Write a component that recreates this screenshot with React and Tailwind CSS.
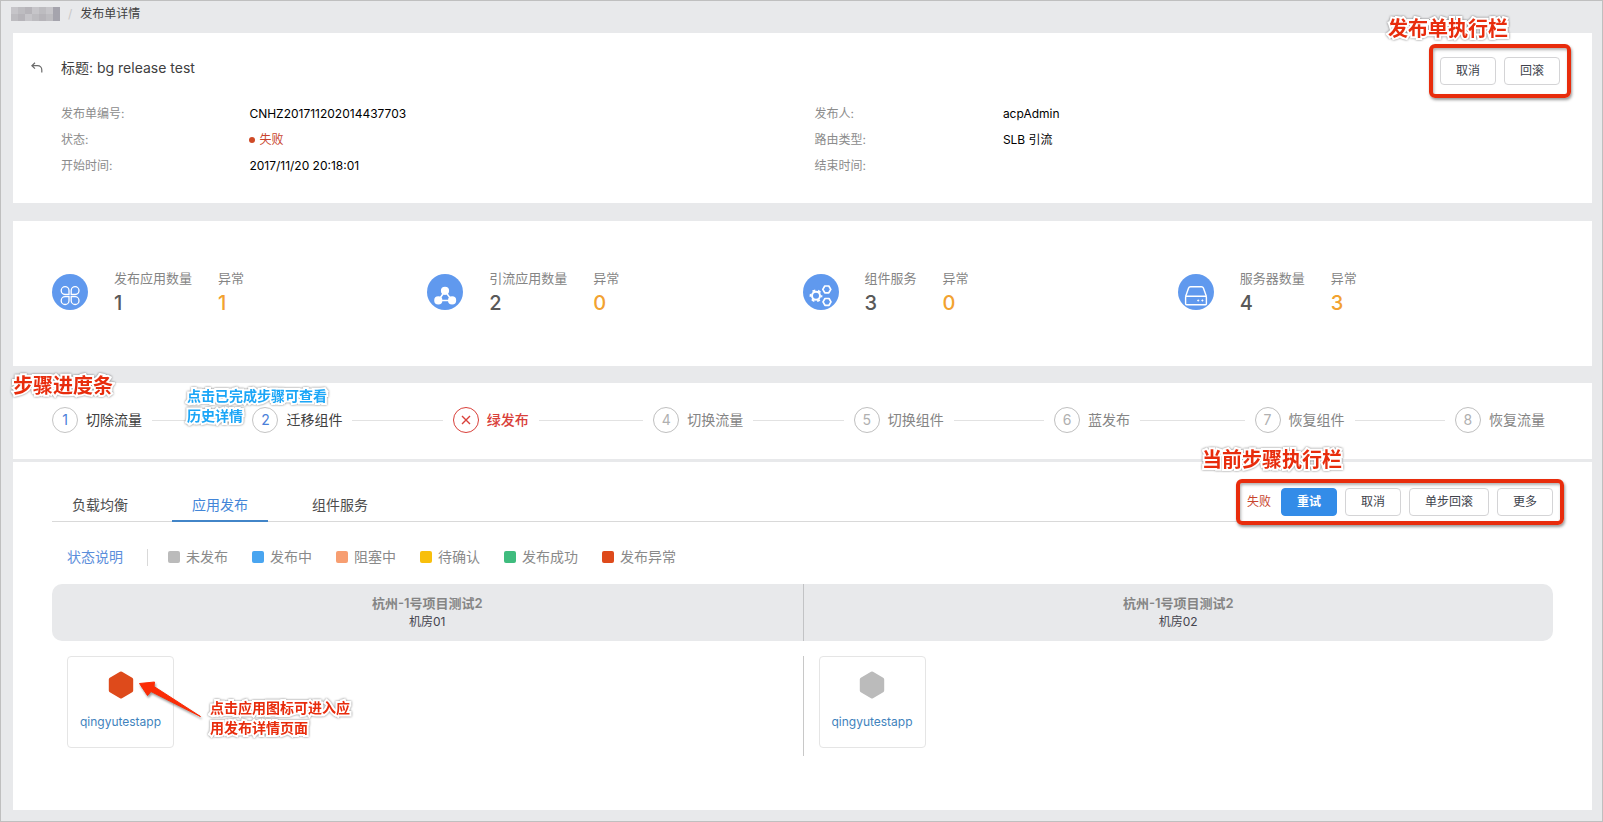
import React from "react";

function CloverIcon() {
  return (
    <g fill="none" stroke="#fff" strokeWidth="1.3">
      <path d="M17 20.5h-4a3.9 3.9 0 1 1 4-4z" />
      <path d="M19.2 20.5h4a3.9 3.9 0 1 0-4-4z" />
      <path d="M17 22.7h-4a3.9 3.9 0 1 0 4 4z" />
      <path d="M19.2 22.7h4a3.9 3.9 0 1 1-4 4z" />
    </g>
  );
}

function NodesIcon() {
  return (
    <g fill="#fff" stroke="#fff" strokeWidth="1.6">
      <path d="M18 17L11.4 26.5H25L18 17z" fill="none" />
      <circle cx="18" cy="16.8" r="3.3" />
      <circle cx="11.3" cy="26.4" r="3.3" />
      <circle cx="25.1" cy="26.4" r="3.3" />
    </g>
  );
}

function GearsIcon() {
  return (
    <g fill="none" stroke="#fff" strokeLinejoin="round">
      <circle cx="13" cy="21.8" r="4" strokeWidth="2" />
      <circle cx="13" cy="21.8" r="5.5" strokeWidth="1.8" strokeDasharray="2.88 2.88" strokeDashoffset="1.44" />
      <path d="M21.8 12h4l2 3.400-2 3.400h-4l-2-3.400z" strokeWidth="1.7" />
      <path d="M22 24.500h4l2 3.400-2 3.400h-4l-2-3.400z" strokeWidth="1.7" />
    </g>
  );
}

function DriveIcon() {
  return (
    <g fill="none" stroke="#fff" strokeWidth="1.4" strokeLinejoin="round">
      <path d="M7.6 22.4l3-8.4q.5-1.3 1.9-1.3h11q1.4 0 1.9 1.3l3 8.4" />
      <rect x="7.6" y="22.2" width="20.8" height="8.6" rx="1" />
      <circle cx="20.2" cy="26.5" r=".7" fill="#fff" strokeWidth=".6" />
      <circle cx="24.4" cy="26.5" r=".7" fill="#fff" strokeWidth=".6" />
    </g>
  );
}

const stats = [
  { label: "发布应用数量", value: 1, errors: 1, Icon: CloverIcon },
  { label: "引流应用数量", value: 2, errors: 0, Icon: NodesIcon },
  { label: "组件服务", value: 3, errors: 0, Icon: GearsIcon },
  { label: "服务器数量", value: 4, errors: 3, Icon: DriveIcon },
];

const steps = [
  { label: "切除流量", state: "done" },
  { label: "迁移组件", state: "done" },
  { label: "绿发布", state: "error" },
  { label: "切换流量", state: "wait" },
  { label: "切换组件", state: "wait" },
  { label: "蓝发布", state: "wait" },
  { label: "恢复组件", state: "wait" },
  { label: "恢复流量", state: "wait" },
];

const stepStyles = {
  done: { circle: "border-[#c4c4c4] text-[#4a80d9]", label: "text-[#404040]" },
  error: { circle: "border-[#d9403a] text-[#d9403a]", label: "text-[#d9403a] font-medium" },
  wait: { circle: "border-[#bfbfbf] text-[#b0b0b0]", label: "text-[#858585]" },
};

const legend = [
  { label: "未发布", color: "bg-[#bbbbbb]" },
  { label: "发布中", color: "bg-[#49a5f0]" },
  { label: "阻塞中", color: "bg-[#f79e71]" },
  { label: "待确认", color: "bg-[#f8bf0c]" },
  { label: "发布成功", color: "bg-[#3fbc7e]" },
  { label: "发布异常", color: "bg-[#de4a1b]" },
];

const rooms = [
  { name: "机房01", hex: "fill-[#de4a1b]" },
  { name: "机房02", hex: "fill-[#bbbbbb]" },
];

const details = [
  ["发布单编号:", "CNHZ201711202014437703"],
  ["发布人:", "acpAdmin"],
  ["状态:", "失败"],
  ["路由类型:", "SLB 引流"],
  ["开始时间:", "2017/11/20 20:18:01"],
  ["结束时间:", ""],
];

function Button({ primary, children }) {
  return (
    <button
      type="button"
      className={
        "h-7 rounded border px-[15px] text-xs whitespace-nowrap " +
        (primary
          ? "border-[#338ce8] bg-[#338ce8] font-bold text-white"
          : "border-[#d4d4d6] bg-white text-[#40434d]")
      }
    >
      {children}
    </button>
  );
}

function Note({ className, children }) {
  return (
    <div
      className={
        "pointer-events-none absolute z-10 font-bold whitespace-nowrap [-webkit-text-stroke:4px_white] [paint-order:stroke_fill] drop-shadow-[0_0_1px_rgba(0,0,0,0.5)] " +
        className
      }
    >
      {children}
    </div>
  );
}

function Frame({ className }) {
  return (
    <div
      className={
        "pointer-events-none absolute rounded-md border-4 border-[#e82c0c] shadow-[1px_2px_3px_rgba(0,0,0,0.4),inset_1px_2px_3px_rgba(0,0,0,0.3)] " +
        className
      }
    />
  );
}

function Hexagon({ className }) {
  return (
    <svg width="26" height="28" viewBox="0 0 26 28" className={className} aria-hidden="true">
      <path d="M12 .8q1-.6 2 0l10.200 5.900q1 .6 1 1.700v11.200q0 1.100-1 1.700L14 27.200q-1 .6-2 0L1.800 21.300q-1-.6-1-1.700V8.400q0-1.100 1-1.700z" />
    </svg>
  );
}

export default function App() {
  return (
    <div className="flex min-h-screen flex-col border border-[#bfbfbf] bg-[#e8e9eb] pr-2.5 pb-[11px] pl-3 font-['Inter','Noto_Sans_CJK_SC',sans-serif] text-xs text-black">
      <nav className="-ml-0.5 flex h-8 shrink-0 items-center pb-1.5">
        <svg width="49" height="14" viewBox="0 0 49 14" aria-hidden="true">
          <rect width="49" height="14" fill="#bdbcc0" />
          <path d="M0 0h7v7H0zM21 0h7v7h-7zM35 0h7v7h-7zM14 7h7v7h-7z" fill="#c6c5c9" />
          <path d="M7 7h7v7H7zM28 7h7v7h-7zM14 0h7v7h-7z" fill="#b6b4b9" />
          <path d="M42 0h7v14h-7z" fill="#a5a4ad" />
        </svg>
        <span className="ml-2 text-[#c8c8c8]">/</span>
        <span className="ml-2 text-[#404040]">发布单详情</span>
      </nav>

      <section className="relative bg-white py-6 pl-12 pr-6">
        <Note className="right-[84px] -top-[18px] text-xl text-[#e82c0c]">发布单执行栏</Note>
        <div className="flex items-start justify-between pr-2">
          <div className="-ml-[30px] flex items-center">
            <button type="button" aria-label="返回" className="w-[30px]">
              <svg width="12" height="12" viewBox="0 0 12 12" fill="none" stroke="#6b6b6b" strokeWidth="1.200">
                <path d="M4 .8L.9 3.700 4 6.600M1 3.700h5.500c2.600 0 4.300 1.600 4.300 4.200v2.600" />
              </svg>
            </button>
            <h1 className="text-sm leading-[22px] text-[#404040]">标题: bg release test</h1>
          </div>
          <div className="relative flex gap-2">
            <Button>取消</Button>
            <Button>回滚</Button>
            <Frame className="-inset-x-[11px] -inset-y-[13px]" />
          </div>
        </div>
        <dl className="mt-4 grid grid-cols-2">
          {details.map(([label, value]) => (
            <div key={label} className="grid grid-cols-4 leading-[26px]">
              <dt className="text-[#8c8c8c]">{label}</dt>
              <dd className="col-span-3">
                {label === "状态:" ? (
                  <span className="flex items-center gap-1 text-[#c8432c]">
                    <span className="size-1.5 rounded-full bg-[#cf4a26]" />
                    {value}
                  </span>
                ) : (
                  value
                )}
              </dd>
            </div>
          ))}
        </dl>
      </section>

      <section className="mt-[18px] grid grid-cols-4 bg-white px-[39px] pt-[47px] pb-12">
        {stats.map(({ label, value, errors, Icon }) => (
          <div key={label} className="flex items-center">
            <svg width="36" height="36" viewBox="0 0 36 36" className="mb-0.5" aria-hidden="true">
              <circle cx="18" cy="18" r="18" fill="#6099ee" />
              <Icon />
            </svg>
            <div className="ml-[26px]">
              <div className="text-[13px] leading-5 text-[#858585]">{label}</div>
              <div className="text-xl leading-[30px] font-medium text-[#595959]">{value}</div>
            </div>
            <div className="ml-[26px]">
              <div className="text-[13px] leading-5 text-[#858585]">异常</div>
              <div className="text-xl leading-[30px] font-medium text-[#f2a230]">{errors}</div>
            </div>
          </div>
        ))}
      </section>

      <section className="relative mt-[17px] bg-white pt-6 pr-[47px] pb-[26px] pl-[39px]">
        <Note className="left-0 -top-[11px] text-xl text-[#e82c0c]">步骤进度条</Note>
        <Note className="left-[174px] top-[3px] text-sm leading-5 text-[#1ba6f7]">
          点击已完成步骤可查看
          <br />
          历史详情
        </Note>
        <ol className="flex text-sm">
          {steps.map((step, i) => {
            const last = i === steps.length - 1;
            const style = stepStyles[step.state];
            return (
              <li key={step.label} className={"flex items-center " + (last ? "flex-none" : "flex-1")}>
                <span
                  className={
                    "flex size-[26px] shrink-0 items-center justify-center rounded-full border " + style.circle
                  }
                >
                  {step.state === "error" ? (
                    <svg width="10" height="10" viewBox="0 0 10 10" stroke="currentColor" strokeWidth="1.400" aria-hidden="true">
                      <path d="M1 1l8 8M9 1L1 9" />
                    </svg>
                  ) : (
                    i + 1
                  )}
                </span>
                <span className={"ml-2 whitespace-nowrap " + style.label}>{step.label}</span>
                {!last && <span className="mx-2.5 h-px flex-1 bg-[#e2e2e2]" />}
              </li>
            );
          })}
        </ol>
      </section>

      <section className="relative mt-[3px] flex-1 bg-white px-[39px] pt-[26px]">
        <Note className="right-[250px] -top-4 text-xl text-[#e82c0c]">当前步骤执行栏</Note>
        <div className="flex items-end justify-between border-b border-[#d9d9d9]">
          <div role="tablist" className="-mb-px flex gap-6 text-sm leading-[22px]">
            {["负载均衡", "应用发布", "组件服务"].map((tab, i) => (
              <button
                key={tab}
                type="button"
                role="tab"
                aria-selected={i === 1}
                className={
                  "border-b-2 px-5 pb-1 " +
                  (i === 1 ? "border-[#4285c8] text-[#4285d8]" : "border-transparent text-[#4d4d4d]")
                }
              >
                {tab}
              </button>
            ))}
          </div>
          <div className="relative mb-[5px] flex items-center gap-2">
            <span className="mr-0.5 text-[#c8432c]">失败</span>
            <Button primary>重试</Button>
            <Button>取消</Button>
            <Button>单步回滚</Button>
            <Button>更多</Button>
            <Frame className="-inset-x-[11px] -inset-y-[9px]" />
          </div>
        </div>

        <div className="mt-6 flex items-center pl-[15px] text-sm leading-[22px]">
          <span className="text-[#5b8edb]">状态说明</span>
          <span className="mr-5 ml-6 h-[17px] w-px bg-[#d9d9d9]" />
          <ul className="flex gap-6">
            {legend.map(({ label, color }) => (
              <li key={label} className="flex items-center gap-1.5 text-[#8a8a8a]">
                <span className={"size-3 rounded-xs " + color} />
                {label}
              </li>
            ))}
          </ul>
        </div>

        <div className="mt-4 grid grid-cols-2 overflow-hidden rounded-[10px] bg-[#e8e9eb] text-center">
          {rooms.map(({ name }, i) => (
            <div key={name} className={"py-2.5 " + (i ? "border-l border-[#c2c3c5]" : "")}>
              <div className="text-[13px] leading-[18px] font-semibold text-[#858585]">杭州-1号项目测试2</div>
              <div className="leading-[19px] text-[#45454f]">{name}</div>
            </div>
          ))}
        </div>

        <div className="relative mt-[15px] grid grid-cols-2">
          {rooms.map(({ name, hex }, i) => (
            <div key={name} className={"h-[100px] " + (i ? "border-l border-[#c8c8c8] pl-[15px]" : "pl-[15px]")}>
              <a
                href="#app"
                className="flex h-[92px] w-[107px] flex-col items-center rounded border border-[#e5e5e5] pt-3.5 text-[#3f83bd]"
              >
                <Hexagon className={hex} />
                <span className="mt-3.5 leading-[18px]">qingyutestapp</span>
              </a>
            </div>
          ))}
          <svg
            width="68"
            height="42"
            viewBox="0 0 68 42"
            className="pointer-events-none absolute left-[85px] top-6 drop-shadow-[1px_2px_1px_rgba(0,0,0,0.4)]"
            aria-hidden="true"
          >
            <path d="M2.500 3.500L17.500 2 17 6.500 63.500 36.500 14 11.500 10.500 15.500z" fill="#fb2c06" stroke="#fb2c06" strokeWidth="1" strokeLinejoin="round" />
          </svg>
          <Note className="left-[158px] top-[42px] text-sm leading-5 text-[#e82c0c]">
            点击应用图标可进入应
            <br />
            用发布详情页面
          </Note>
        </div>
      </section>
    </div>
  );
}
